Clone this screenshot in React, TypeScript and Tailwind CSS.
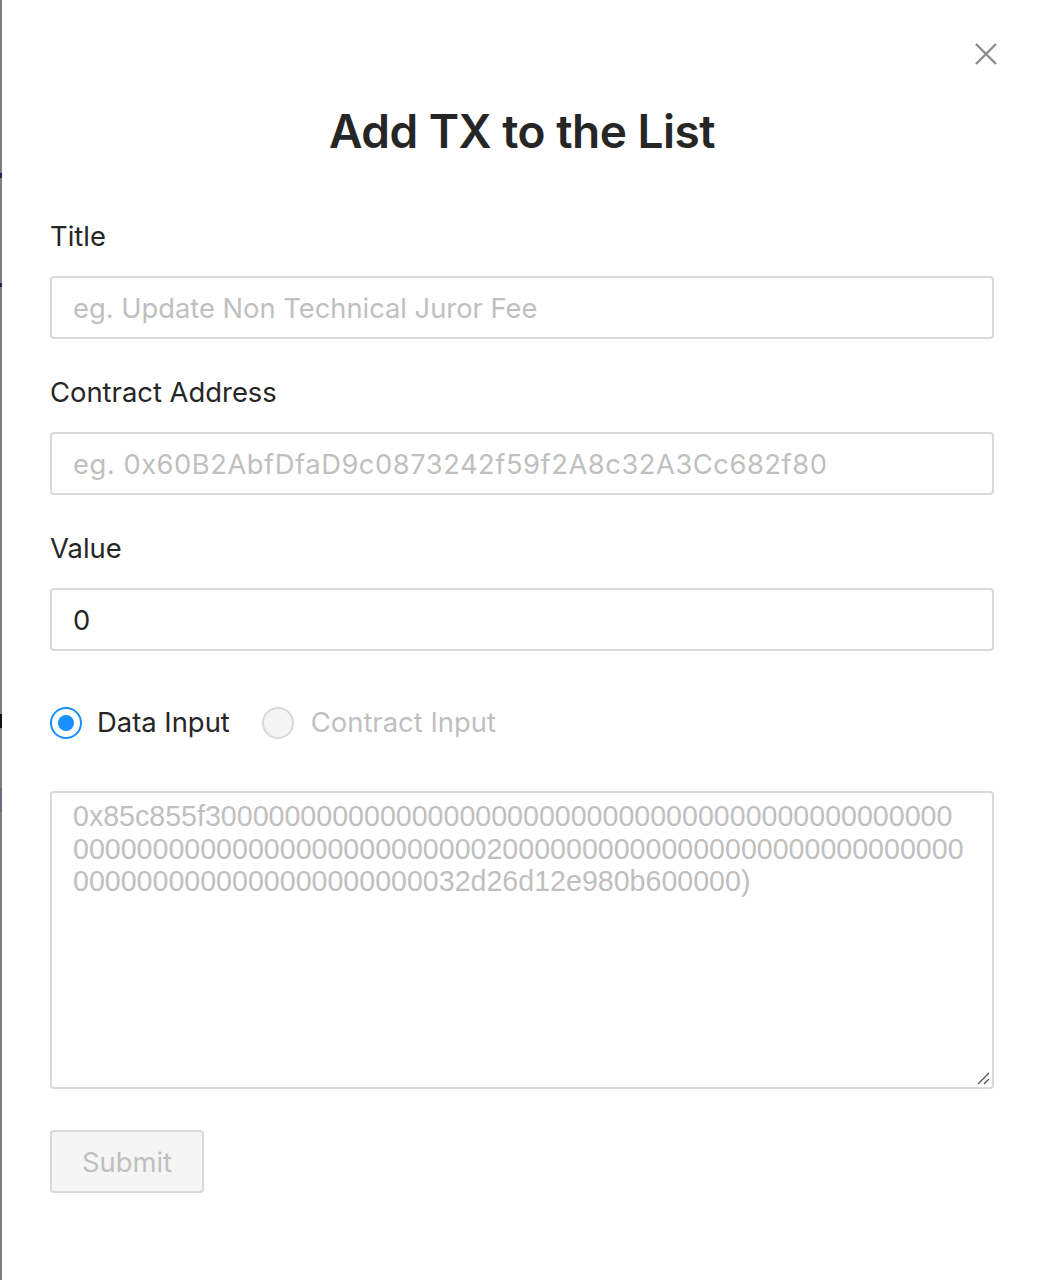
import React from "react";

const line1 = "0x85c855f3" + "0".repeat(46);
const line2 = "0".repeat(26) + "2" + "0".repeat(29);
const line3 = "0".repeat(23) + "32d26d12e980b600000)";

function Field({ label, placeholder, value, wide }: { label: string; placeholder?: string; value?: string; wide?: boolean }) {
  return (
    <div className="flex flex-col">
      <div className="h-[40px] leading-[40px] text-[27.4px] text-[#262626]">{label}</div>
      <div className="mt-[20px] h-[63px] rounded-[4px] border-2 border-[#d9d9d9] bg-white flex items-center px-[21px] pt-[3px] text-[27.3px]">
        {value !== undefined ? (
          <span className="text-[#262626]">{value}</span>
        ) : (
          <span className={wide ? "text-[#bfbfbf] tracking-[0.55px]" : "text-[#bfbfbf]"}>{placeholder}</span>
        )}
      </div>
    </div>
  );
}

export default function App() {
  return (
    <div className="flex min-h-[1280px] w-[1038px] overflow-hidden bg-white" style={{ fontFamily: "Inter, 'Noto Sans', sans-serif" }}>
      <div className="relative w-[2px] shrink-0 bg-[#7f7f7f]">
        <div className="absolute left-0 top-[173px] h-[5px] w-[2px] bg-[#2a1f5c]" />
        <div className="absolute left-0 top-[283px] h-[4px] w-[2px] bg-[#2a1f5c]" />
        <div className="absolute left-0 top-[714px] h-[14px] w-[2px] bg-[#111]" />
        <div className="absolute left-0 top-[788px] h-[24px] w-[2px] bg-[#6f6a80]" />
      </div>
      <div className="relative min-w-0 flex-1 pl-[48px] pr-[44px] pt-[102px]">
        <button className="absolute right-[41px] top-[43px] h-[22px] w-[22px] flex items-center justify-center">
          <svg width="22" height="22" viewBox="0 0 22 22" fill="none">
            <path d="M1 1L21 21M21 1L1 21" stroke="#8c8c8c" strokeWidth="2.4" />
          </svg>
        </button>
        <h1 className="h-[58px] leading-[58px] text-center text-[46px] font-semibold text-[#262626] tracking-[-0.5px]">
          Add TX to the List
        </h1>
        <div className="mt-[56px] flex flex-col gap-[33px]">
          <Field label="Title" placeholder="eg. Update Non Technical Juror Fee" />
          <Field label="Contract Address" placeholder="eg. 0x60B2AbfDfaD9c0873242f59f2A8c32A3Cc682f80" wide />
          <Field label="Value" value="0" />
        </div>
        <div className="mt-[52px] h-[40px] flex items-center text-[27.4px]">
          <div className="h-[32px] w-[32px] rounded-full border-2 border-[#1890ff] flex items-center justify-center bg-white">
            <div className="h-[16px] w-[16px] rounded-full bg-[#1890ff]" />
          </div>
          <span className="ml-[15px] text-[#262626]">Data Input</span>
          <div className="ml-[32px] h-[32px] w-[32px] rounded-full border-2 border-[#d9d9d9] bg-[#f5f5f5]" />
          <span className="ml-[17px] text-[#bfbfbf]">Contract Input</span>
        </div>
        <div
          className="relative mt-[48px] h-[298px] overflow-hidden rounded-[4px] border-2 border-[#d9d9d9] px-[21px] pt-[7px] text-[28.6px] leading-[32.5px] text-[#bfbfbf]"
          style={{ fontFamily: "'Liberation Sans', Arial, sans-serif" }}
        >
          <div className="whitespace-nowrap">{line1}</div>
          <div className="whitespace-nowrap">{line2}</div>
          <div className="whitespace-nowrap">{line3}</div>
          <svg className="absolute right-[2px] bottom-[2px]" width="14" height="14" viewBox="0 0 14 14" fill="none">
            <path d="M2 13L13 2M8 13L13 8" stroke="#555" strokeWidth="1.3" />
          </svg>
        </div>
        <button className="mt-[41px] h-[63px] w-[154px] rounded-[4px] border-2 border-[#d9d9d9] bg-[#f5f5f5] pt-[2px] text-[27.4px] text-[#bfbfbf]">
          Submit
        </button>
      </div>
    </div>
  );
}
